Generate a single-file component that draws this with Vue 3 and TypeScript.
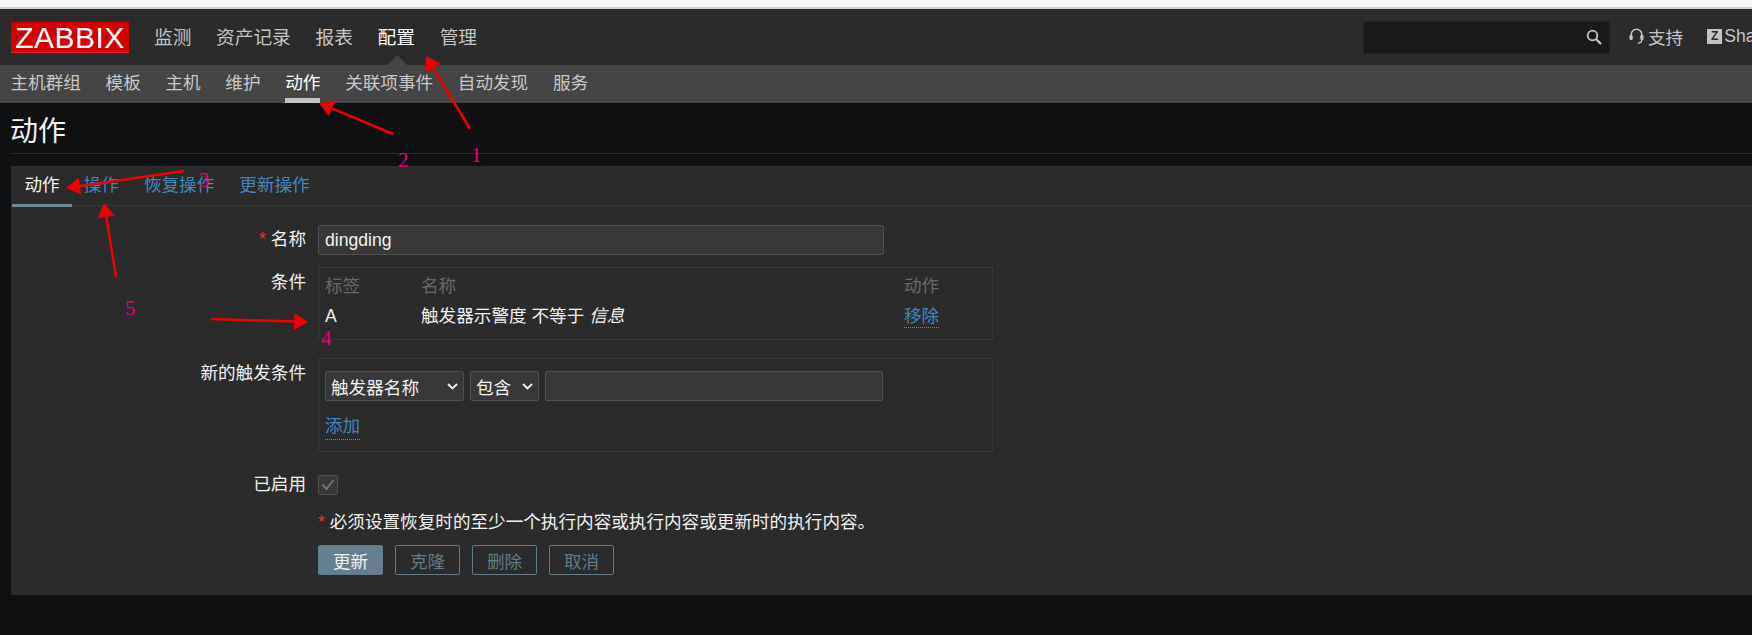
<template>
  <div class="page">
    <div class="browser-strip"></div>

    <header class="top-bar">
      <div class="logo">ZABBIX</div>
      <nav class="main-nav">
        <a v-for="item in mainNav" :key="item" :class="{ active: item === '配置' }">{{ item }}</a>
      </nav>
      <div class="top-right">
        <div class="search">
          <svg width="16" height="16" viewBox="0 0 16 16" fill="none" stroke="#c4c4c4" stroke-width="1.8">
            <circle cx="6.5" cy="6.5" r="4.8" />
            <path d="M10 10l5 5" stroke-width="2.2" />
          </svg>
        </div>
        <a class="top-link support">
          <svg width="15" height="17" viewBox="0 0 15 17" fill="none" stroke="#c4c4c4" stroke-width="1.6">
            <path d="M2.200 8V6.500a5.300 5.300 0 0 1 10.600 0V8" />
            <path d="M12.800 11.500c0 2.200-1.600 3.600-4 3.800" stroke-width="1.3" />
            <rect x="0.500" y="7" width="3.200" height="5" rx="1.200" fill="#c4c4c4" stroke="none" />
            <rect x="11.300" y="7" width="3.200" height="5" rx="1.200" fill="#c4c4c4" stroke="none" />
          </svg>
          支持
        </a>
        <a class="top-link share"><span class="z-box">Z</span>Share</a>
      </div>
    </header>

    <nav class="sub-nav">
      <a v-for="item in subNav" :key="item" :class="{ active: item === '动作' }">{{ item }}</a>
    </nav>

    <h1 class="page-title">动作</h1>

    <section class="panel">
      <div class="tabs">
        <a v-for="tab in tabs" :key="tab" :class="{ active: tab === '动作' }">{{ tab }}</a>
      </div>

      <div class="form">
        <div class="row row-name">
          <label class="label"><i class="star">*</i> 名称</label>
          <input class="text-input name-input" value="dingding" />
        </div>

        <div class="row row-cond">
          <label class="label">条件</label>
          <div class="box cond-box">
            <div class="cond-line cond-head">
              <span>标签</span><span>名称</span><span>动作</span>
            </div>
            <div class="cond-line cond-body">
              <span>A</span>
              <span>触发器示警度 不等于 <em>信息</em></span>
              <span><a class="link">移除</a></span>
            </div>
          </div>
        </div>

        <div class="row row-new">
          <label class="label">新的触发条件</label>
          <div class="box new-box">
            <div class="new-controls">
              <div class="select sel-a">
                触发器名称
                <svg width="11" height="7" viewBox="0 0 11 7" fill="none" stroke="#f2f2f2" stroke-width="1.800"><path d="M1 1l4.500 4.500L10 1" /></svg>
              </div>
              <div class="select sel-b">
                包含
                <svg width="11" height="7" viewBox="0 0 11 7" fill="none" stroke="#f2f2f2" stroke-width="1.800"><path d="M1 1l4.500 4.500L10 1" /></svg>
              </div>
              <input class="text-input value-input" />
            </div>
            <a class="link add-link">添加</a>
          </div>
        </div>

        <div class="row row-enabled">
          <label class="label">已启用</label>
          <div class="checkbox">
            <svg width="14" height="12" viewBox="0 0 14 12" fill="none" stroke="#67757f" stroke-width="2"><path d="M1.500 5.500l4 4.500 7-9" /></svg>
          </div>
        </div>

        <div class="row row-note">
          <span></span>
          <p class="note"><i class="star">*</i> 必须设置恢复时的至少一个执行内容或执行内容或更新时的执行内容。</p>
        </div>

        <div class="row row-buttons">
          <span></span>
          <div class="buttons">
            <button class="primary">更新</button>
            <button v-for="b in secondaryButtons" :key="b">{{ b }}</button>
          </div>
        </div>
      </div>
    </section>

    <!-- hand drawn marks on top of the screenshot -->
    <svg class="marks" width="1752" height="635" viewBox="0 0 1752 635">
      <g v-for="a in arrows" :key="a.n">
        <line :x1="a.x1" :y1="a.y1" :x2="a.sx" :y2="a.sy" stroke="#f00000" stroke-width="2.500" />
        <polygon :points="a.head" fill="#f00000" />
      </g>
      <text v-for="d in digits" :key="d.n" :x="d.x" :y="d.y" class="digit">{{ d.n }}</text>
    </svg>
  </div>
</template>

<script setup lang="ts">
const mainNav = ["监测", "资产记录", "报表", "配置", "管理"];
const subNav = ["主机群组", "模板", "主机", "维护", "动作", "关联项事件", "自动发现", "服务"];
const tabs = ["动作", "操作", "恢复操作", "更新操作"];
const secondaryButtons = ["克隆", "删除", "取消"];

// tail -> tip, the head is worked out from the direction
function arrow(n: number, x1: number, y1: number, x2: number, y2: number) {
  const len = Math.hypot(x2 - x1, y2 - y1);
  const ux = (x2 - x1) / len;
  const uy = (y2 - y1) / len;
  const bx = x2 - ux * 14;
  const by = y2 - uy * 14;
  const head = [
    `${x2},${y2}`,
    `${bx - uy * 8.5},${by + ux * 8.5}`,
    `${bx + uy * 8.5},${by - ux * 8.5}`,
  ].join(" ");
  return { n, x1, y1, sx: bx, sy: by, head };
}

const arrows = [
  arrow(1, 470, 129, 426, 56),
  arrow(2, 393, 134, 319, 103),
  arrow(3, 184, 171, 66, 188),
  arrow(4, 211, 319, 308, 322),
  arrow(5, 116, 277, 104, 203),
];

const digits = [
  { n: 1, x: 471, y: 162 },
  { n: 2, x: 398, y: 167 },
  { n: 3, x: 199, y: 187 },
  { n: 4, x: 321, y: 345 },
  { n: 5, x: 125, y: 315 },
];
</script>

<style>
html,
body {
  margin: 0;
  background: #0e1012;
}
</style>

<style scoped>
.page {
  position: relative;
  width: 1752px;
  height: 635px;
  overflow: hidden;
  background: #0e1012;
  color: #f2f2f2;
  font-family: "Liberation Sans", "Noto Sans CJK SC", sans-serif;
  font-size: 17.6px;
}
.browser-strip {
  height: 7px;
  background: #f7f7f7;
  border-bottom: 2px solid #cfcfcf;
}
.top-bar {
  display: flex;
  align-items: center;
  height: 56px;
  padding-left: 11px;
  background: #2b2b2b;
}
.logo {
  width: 118px;
  height: 31px;
  background: #d40000;
  border-bottom: 1px solid #f02020;
  box-sizing: border-box;
  color: #fff;
  font-size: 30px;
  letter-spacing: 0.500px;
  line-height: 31px;
  text-align: center;
}
.main-nav {
  display: flex;
  gap: 24.700px;
  margin-left: 25px;
  padding-bottom: 4px;
  font-size: 18.700px;
  color: #c4c4c4;
}
.main-nav a.active {
  color: #fff;
}
.main-nav a.active::after {
  content: "";
  position: absolute;
  left: 387px;
  top: 55px;
  border-left: 10px solid transparent;
  border-right: 10px solid transparent;
  border-bottom: 10px solid #454545;
}
.top-right {
  display: flex;
  align-items: center;
  width: 389px;
  margin-left: auto;
  overflow: hidden;
  white-space: nowrap;
  color: #c4c4c4;
}
.search {
  display: flex;
  align-items: center;
  justify-content: flex-end;
  flex: none;
  width: 247px;
  height: 33px;
  padding-right: 7px;
  box-sizing: border-box;
  background: #1a1a1a;
  border: 1px solid #222;
  border-radius: 2px;
}
.top-link {
  display: flex;
  align-items: center;
  flex: none;
  margin-top: -2px;
}
.support {
  gap: 4px;
  margin-left: 19px;
}
.share {
  margin-left: 24px;
}
.z-box {
  width: 15px;
  height: 15px;
  margin-right: 2px;
  background: #c4c4c4;
  color: #2b2b2b;
  font-size: 12px;
  font-weight: bold;
  line-height: 15px;
  text-align: center;
}
.sub-nav {
  display: flex;
  gap: 24.700px;
  height: 38px;
  padding-left: 10.500px;
  box-sizing: border-box;
  background: #454545;
  color: #c8c8c8;
  line-height: 36px;
}
.sub-nav a.active {
  height: 38px;
  box-sizing: border-box;
  color: #fff;
  border-bottom: 5px solid #c4c4c4;
}
.page-title {
  margin: 0 0 12px 11px;
  padding: 13px 0 5px;
  height: 32px;
  border-bottom: 1px solid #2b2b2b;
  font-size: 28px;
  font-weight: normal;
  line-height: 32px;
  text-indent: -1px;
  color: #f2f2f2;
}
.panel {
  height: 429px;
  margin-left: 11px;
  background: #2b2b2b;
}
.tabs {
  display: flex;
  height: 40px;
  box-sizing: border-box;
  padding-left: 1px;
  border-bottom: 1px solid #383838;
  color: #3f88bf;
  line-height: 39px;
}
.tabs a {
  padding: 0 12.500px;
}
.tabs a.active {
  height: 41px;
  margin-right: -1px;
  box-sizing: border-box;
  color: #f2f2f2;
  border-bottom: 3px solid #6c8694;
}
.row {
  display: grid;
  grid-template-columns: 295px 675px;
  column-gap: 12px;
}
.label {
  text-align: right;
  line-height: 24px;
}
.star {
  color: #e33734;
  font-style: normal;
}
.row-name {
  margin-top: 19px;
}
.row-name .label {
  line-height: 28px;
}
.row-cond {
  margin-top: 12px;
}
.row-cond .label,
.row-new .label {
  padding-top: 3px;
}
.row-new {
  margin-top: 18px;
}
.row-enabled {
  margin-top: 23px;
}
.row-enabled .label {
  line-height: 18px;
}
.row-note {
  margin-top: 15px;
}
.row-buttons {
  margin-top: 11px;
}
.text-input {
  height: 30px;
  padding: 0 6px;
  box-sizing: border-box;
  background: #383838;
  border: 1px solid #4f4f4f;
  border-radius: 2px;
  color: #f2f2f2;
  font: inherit;
  outline: none;
}
.name-input {
  width: 566px;
}
.box {
  border: 1px solid #383838;
  box-sizing: border-box;
}
.cond-box {
  height: 73px;
  padding: 5px 6px 0;
}
.cond-line {
  display: grid;
  grid-template-columns: 96px 483px 1fr;
  line-height: 26px;
}
.cond-head {
  color: #686868;
}
.cond-body {
  margin-top: 4px;
}
.cond-body em {
  font-style: italic;
}
.link {
  color: #3f88bf;
  border-bottom: 1px dotted #4796c4;
  padding-bottom: 1px;
}
.new-box {
  height: 94px;
  padding: 12px 6px 0;
}
.new-controls {
  display: flex;
  gap: 6px;
}
.select {
  display: flex;
  align-items: center;
  justify-content: space-between;
  height: 30px;
  padding: 0 5px 0 5px;
  box-sizing: border-box;
  background: #383838;
  border: 1px solid #4f4f4f;
  border-radius: 2px;
}
.sel-a {
  width: 139px;
}
.sel-b {
  width: 69px;
}
.value-input {
  width: 338px;
}
.add-link {
  display: inline-block;
  margin-top: 13px;
  line-height: 24px;
}
.checkbox {
  display: flex;
  align-items: center;
  justify-content: center;
  width: 20px;
  height: 20px;
  box-sizing: border-box;
  background: #383838;
  border: 1px solid #4f4f4f;
  border-radius: 2px;
}
.note {
  grid-column: 2 / 4;
  margin: 0;
  line-height: 24px;
  white-space: nowrap;
}
.buttons {
  display: flex;
  gap: 12px;
}
.buttons button {
  width: 65px;
  height: 30px;
  padding: 0;
  background: transparent;
  border: 1px solid #62798a;
  border-radius: 2px;
  color: #62798a;
  font: inherit;
}
.buttons button.primary {
  background: #667f8e;
  color: #f2f2f2;
}
.marks {
  position: absolute;
  left: 0;
  top: 0;
  pointer-events: none;
}
.digit {
  fill: #e6007e;
  font-family: "Liberation Serif", serif;
  font-size: 21px;
}
</style>
